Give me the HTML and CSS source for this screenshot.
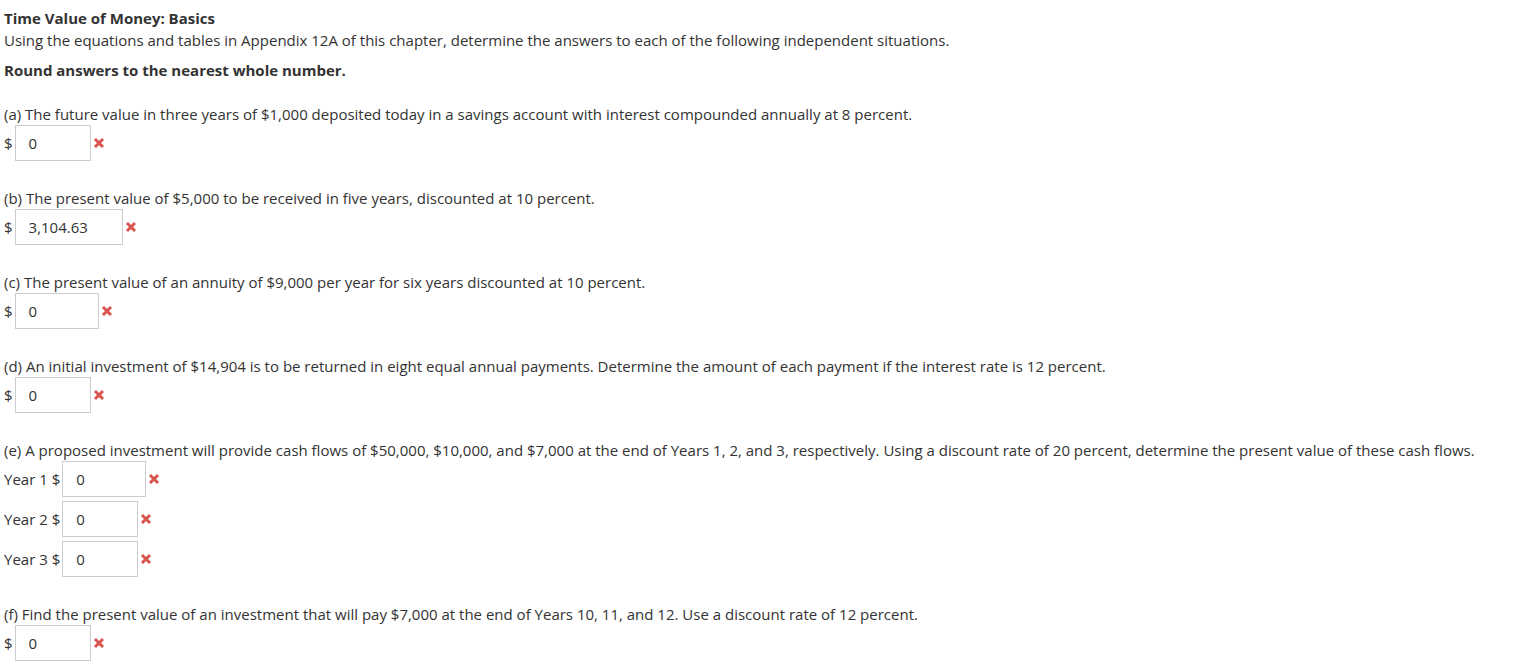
FILE: index.html
```html
<!DOCTYPE html>
<html>
<head>
<meta charset="utf-8">
<link rel="stylesheet" href="styles.css">
</head>
<body>
<div class="page">
  <div class="title">Time Value of Money: Basics</div>
  <div class="desc">Using the equations and tables in Appendix 12A of this chapter, determine the answers to each of the following independent situations.</div>
  <div class="note">Round answers to the nearest whole number.</div>

  <div class="q">
    <div class="qtext">(a) The future value in three years of $1,000 deposited today in a savings account with interest compounded annually at 8 percent.</div>
    <div class="row"><span class="lbl">$</span><span class="box w76">0</span><svg class="x" viewBox="0 0 12 12"><path d="M2 2 L10 10 M10 2 L2 10"/></svg></div>
  </div>

  <div class="q">
    <div class="qtext">(b) The present value of $5,000 to be received in five years, discounted at 10 percent.</div>
    <div class="row"><span class="lbl">$</span><span class="box w108">3,104.63</span><svg class="x" viewBox="0 0 12 12"><path d="M2 2 L10 10 M10 2 L2 10"/></svg></div>
  </div>

  <div class="q">
    <div class="qtext">(c) The present value of an annuity of $9,000 per year for six years discounted at 10 percent.</div>
    <div class="row"><span class="lbl">$</span><span class="box w84">0</span><svg class="x" viewBox="0 0 12 12"><path d="M2 2 L10 10 M10 2 L2 10"/></svg></div>
  </div>

  <div class="q">
    <div class="qtext">(d) An initial investment of $14,904 is to be returned in eight equal annual payments. Determine the amount of each payment if the interest rate is 12 percent.</div>
    <div class="row"><span class="lbl">$</span><span class="box w76">0</span><svg class="x" viewBox="0 0 12 12"><path d="M2 2 L10 10 M10 2 L2 10"/></svg></div>
  </div>

  <div class="q">
    <div class="qtext">(e) A proposed investment will provide cash flows of $50,000, $10,000, and $7,000 at the end of Years 1, 2, and 3, respectively. Using a discount rate of 20 percent, determine the present value of these cash flows.</div>
    <div class="row"><span class="lbl">Year 1 $</span><span class="box w84">0</span><svg class="x" viewBox="0 0 12 12"><path d="M2 2 L10 10 M10 2 L2 10"/></svg></div>
    <div class="row sub"><span class="lbl">Year 2 $</span><span class="box w76">0</span><svg class="x" viewBox="0 0 12 12"><path d="M2 2 L10 10 M10 2 L2 10"/></svg></div>
    <div class="row sub"><span class="lbl">Year 3 $</span><span class="box w76">0</span><svg class="x" viewBox="0 0 12 12"><path d="M2 2 L10 10 M10 2 L2 10"/></svg></div>
  </div>

  <div class="q">
    <div class="qtext">(f) Find the present value of an investment that will pay $7,000 at the end of Years 10, 11, and 12. Use a discount rate of 12 percent.</div>
    <div class="row"><span class="lbl">$</span><span class="box w76">0</span><svg class="x" viewBox="0 0 12 12"><path d="M2 2 L10 10 M10 2 L2 10"/></svg></div>
  </div>
</div>
</body>
</html>
```

FILE: styles.css
```css
html, body {
  margin: 0;
  padding: 0;
  background: #fff;
}
.page {
  padding: 8px 0 0 4px;
  font-family: "Open Sans", "Liberation Sans", sans-serif;
  font-size: 15px;
  line-height: 20px;
  color: #333;
}
.title {
  font-weight: bold;
}
.desc {
  margin-top: 2px;
}
.note {
  margin-top: 10px;
  font-weight: bold;
}
.q {
  margin-top: 27px;
}
.note + .q {
  margin-top: 24px;
}
.row {
  display: flex;
  align-items: center;
  margin-top: 1px;
  height: 36px;
}
.row.sub {
  margin-top: 4px;
}
.lbl {
  margin-right: 2px;
}
.box {
  box-sizing: border-box;
  height: 36px;
  border: 1px solid #ccc;
  padding: 0 13px;
  line-height: 34px;
  display: inline-block;
}
.w76 { width: 76px; }
.w84 { width: 84px; }
.w108 { width: 108px; }
.x {
  width: 12px;
  height: 12px;
  margin-left: 2px;
  fill: none;
  stroke: #d9534f;
  stroke-width: 3;
}
```
